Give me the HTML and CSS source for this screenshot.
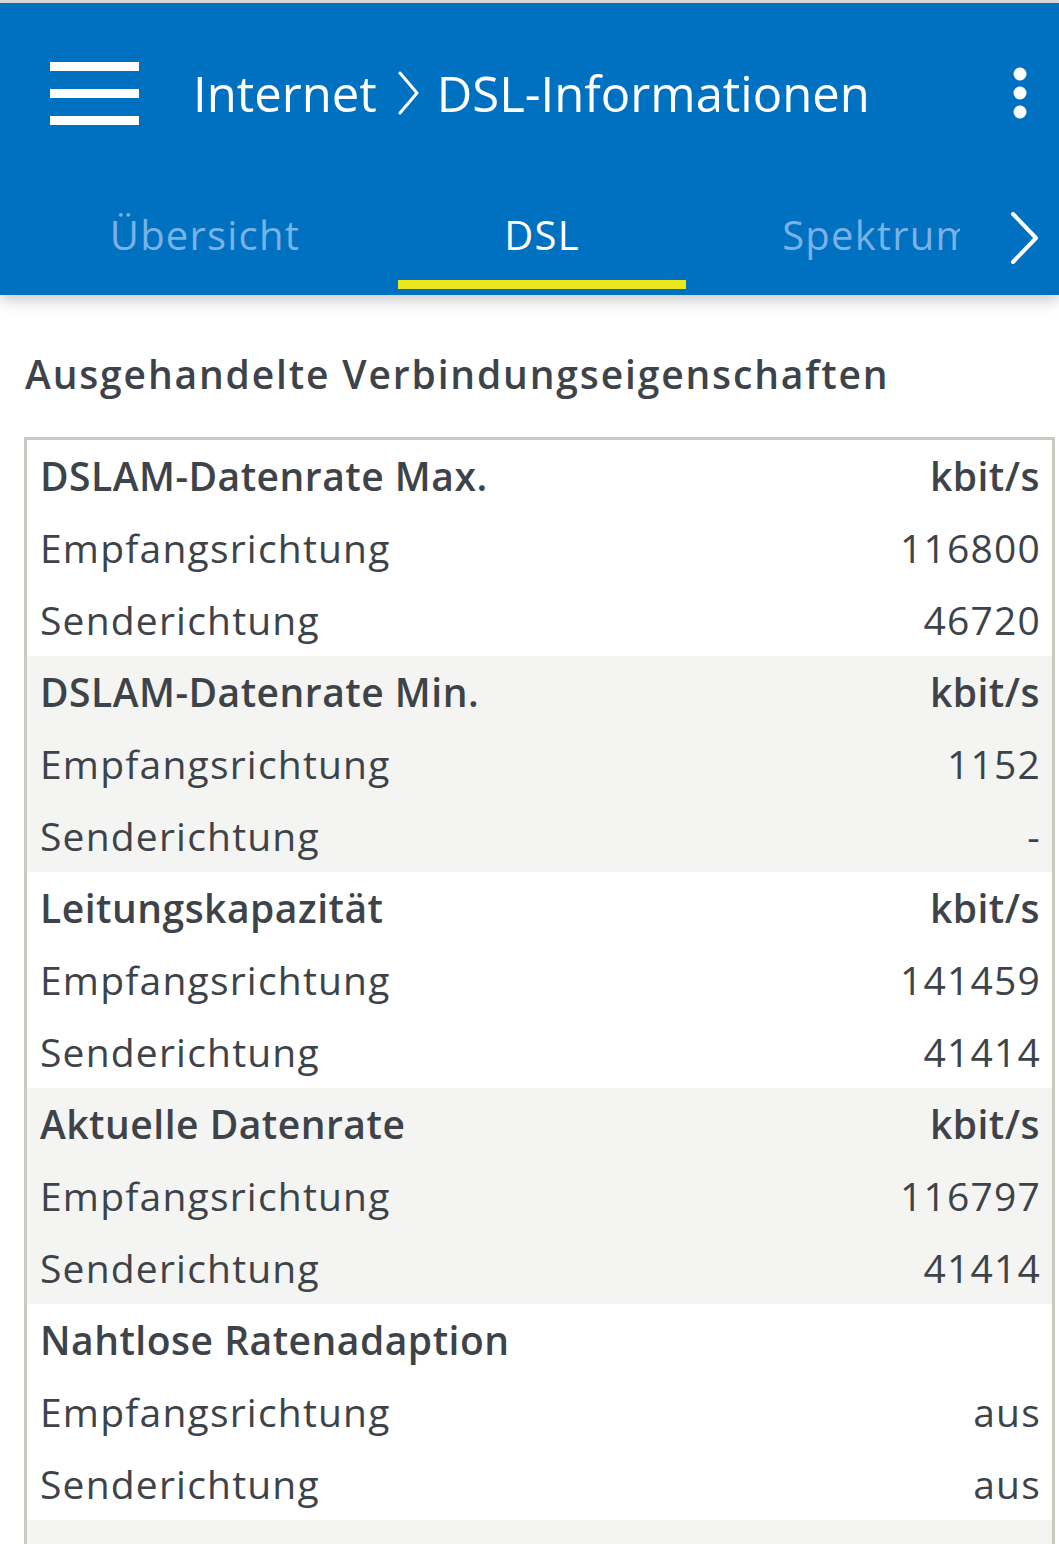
FILE: index.html
```html
<!DOCTYPE html>
<html lang="de">
<head>
<meta charset="utf-8">
<title>DSL-Informationen</title>
<link rel="stylesheet" href="styles.css">
</head>
<body>
<div class="statusline"></div>
<header class="appbar">
  <div class="toolbar">
    <button class="icon-btn menu" aria-label="Menü">
      <svg width="89" height="63" viewBox="0 0 89 63"><rect x="0" y="0" width="89" height="9" fill="#fff"/><rect x="0" y="27" width="89" height="9" fill="#fff"/><rect x="0" y="54" width="89" height="9" fill="#fff"/></svg>
    </button>
    <h1 class="title"><span>Internet</span><svg class="crumb-sep" width="22" height="44" viewBox="0 0 22 44"><polyline points="2,2 19,22 2,42" fill="none" stroke="#fff" stroke-width="3" stroke-linecap="round" stroke-linejoin="round"/></svg><span>DSL-Informationen</span></h1>
    <button class="icon-btn more" aria-label="Mehr">
      <svg width="14" height="52" viewBox="0 0 14 52"><circle cx="7" cy="7" r="6.5" fill="#fff"/><circle cx="7" cy="26" r="6.5" fill="#fff"/><circle cx="7" cy="45" r="6.5" fill="#fff"/></svg>
    </button>
  </div>
  <nav class="tabs">
    <div class="tab-strip">
      <a class="tab tab-first">Übersicht</a>
      <a class="tab tab-active">DSL</a>
      <a class="tab tab-last">Spektrum</a>
    </div>
    <button class="tab-next" aria-label="Weiter">
      <svg width="30" height="52" viewBox="0 0 30 52"><polyline points="3,2 26,26 3,50" fill="none" stroke="#fff" stroke-width="4" stroke-linecap="round" stroke-linejoin="round"/></svg>
    </button>
  </nav>
</header>
<main class="content">
  <h2 class="section-title">Ausgehandelte Verbindungseigenschaften</h2>
  <div class="table">
    <div class="group">
      <div class="row row-head"><span>DSLAM-Datenrate Max.</span><span>kbit/s</span></div>
      <div class="row"><span>Empfangsrichtung</span><span>116800</span></div>
      <div class="row"><span>Senderichtung</span><span>46720</span></div>
    </div>
    <div class="group group-alt">
      <div class="row row-head"><span>DSLAM-Datenrate Min.</span><span>kbit/s</span></div>
      <div class="row"><span>Empfangsrichtung</span><span>1152</span></div>
      <div class="row"><span>Senderichtung</span><span>-</span></div>
    </div>
    <div class="group">
      <div class="row row-head"><span>Leitungskapazität</span><span>kbit/s</span></div>
      <div class="row"><span>Empfangsrichtung</span><span>141459</span></div>
      <div class="row"><span>Senderichtung</span><span>41414</span></div>
    </div>
    <div class="group group-alt">
      <div class="row row-head"><span>Aktuelle Datenrate</span><span>kbit/s</span></div>
      <div class="row"><span>Empfangsrichtung</span><span>116797</span></div>
      <div class="row"><span>Senderichtung</span><span>41414</span></div>
    </div>
    <div class="group">
      <div class="row row-head"><span>Nahtlose Ratenadaption</span><span></span></div>
      <div class="row"><span>Empfangsrichtung</span><span>aus</span></div>
      <div class="row"><span>Senderichtung</span><span>aus</span></div>
    </div>
    <div class="group group-alt">
      <div class="row row-head"><span>&nbsp;</span><span></span></div>
    </div>
  </div>
</main>
</body>
</html>
```

FILE: styles.css
```css
html, body {
  margin: 0;
  padding: 0;
}
body {
  width: 1059px;
  height: 1544px;
  overflow: hidden;
  background: #ffffff;
  font-family: "Open Sans", "Noto Sans", sans-serif;
  color: #3d4349;
}
.statusline {
  height: 3px;
  background: #dedede;
}
.appbar {
  position: relative;
  z-index: 2;
  height: 292px;
  background: #0070c0;
  box-shadow: 0 5px 14px rgba(0, 0, 0, 0.22);
  color: #fff;
}
.toolbar {
  height: 180px;
  display: flex;
  align-items: center;
  padding: 0 32px 0 50px;
}
.icon-btn {
  border: 0;
  padding: 0;
  margin: 0;
  background: none;
  display: flex;
  align-items: center;
  justify-content: center;
}
.menu svg, .more svg { display: block; }
.title {
  flex: 1;
  margin: 0 0 0 54px;
  display: flex;
  align-items: center;
  font-size: 49px;
  font-weight: 400;
  line-height: 60px;
  white-space: nowrap;
}
.crumb-sep {
  margin: 0 17px 0 21px;
  flex: none;
}
.tabs {
  position: relative;
  height: 112px;
  overflow: hidden;
}
.tab-strip {
  display: flex;
  padding-left: 12px;
  height: 106px;
}
.tab {
  flex: none;
  box-sizing: border-box;
  height: 106px;
  padding-top: 5px;
  border-bottom: 9px solid transparent;
  display: flex;
  align-items: center;
  justify-content: center;
  font-size: 40px;
  letter-spacing: 1.2px;
  color: #79b2e4;
}
.tab-first { width: 386px; }
.tab-active {
  width: 288px;
  color: #ffffff;
  border-bottom-color: #e9e71f;
}
.tab-last { width: 384px; }
.tab-next {
  position: absolute;
  top: 0;
  right: 0;
  width: 99px;
  height: 106px;
  border: 0;
  padding: 0 0 0 50px;
  background: #0070c0;
  display: flex;
  align-items: center;
  justify-content: flex-start;
}
.tab-next svg { display: block; margin-top: 4px; }
.content {
  padding: 0 4px 0 24px;
}
.section-title {
  margin: 55px 0 39px 1px;
  font-size: 39px;
  line-height: 48px;
  font-weight: 600;
  letter-spacing: 1.85px;
  white-space: nowrap;
}
.table {
  border: 3px solid #cacac3;
  border-bottom: 0;
}
.group-alt {
  background: #f4f4f2;
}
.row {
  height: 72px;
  display: flex;
  justify-content: space-between;
  align-items: center;
  padding: 0 11px 0 13px;
  font-size: 39px;
  line-height: 72px;
  letter-spacing: 1.2px;
  white-space: nowrap;
}
.row-head {
  font-weight: 600;
  letter-spacing: 0.5px;
  padding-right: 12px;
}
```
